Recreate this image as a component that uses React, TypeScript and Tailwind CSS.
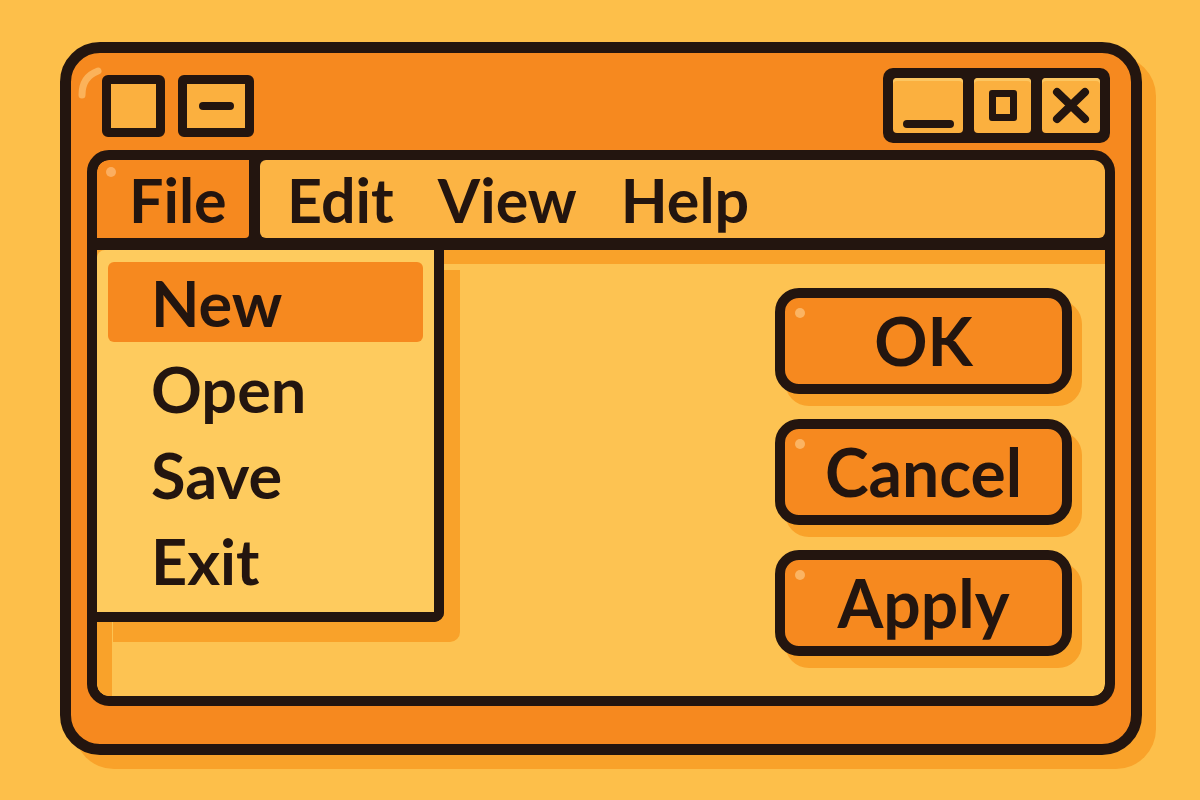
const ink = 'border-[#23150f]';

const menuItems = ['New', 'Open', 'Save', 'Exit'];
const buttons = ['OK', 'Cancel', 'Apply'];

export default function App() {
  return (
    <div className="w-[1200px] h-[800px] bg-[#fdbf4a] pt-[42px] pl-[60px] font-[Lato,sans-serif] font-bold text-[#23150f]">
      <div className={`relative w-[1082px] h-[713px] rounded-[40px] border-[11px] ${ink} bg-[#f6891f] shadow-[14px_14px_0_#f9a22a] flex flex-col px-[16px] pb-[38px]`}>
        {/* gloss mark */}
        <svg className="absolute left-[5px] top-[8px]" width="36" height="44" viewBox="0 0 36 44">
          <path d="M6 34 C6 22 11 14 22 10" stroke="#fbb25a" strokeWidth="7" strokeLinecap="round" fill="none" />
        </svg>

        {/* title bar */}
        <div className="h-[97px] flex justify-between">
          <div className="flex gap-[13px] pl-[15px] pt-[22px]">
            <div className={`w-[63px] h-[62px] border-[9px] ${ink} rounded-[6px] bg-[#fbb03f]`} />
            <div className={`w-[76px] h-[62px] border-[9px] ${ink} rounded-[6px] bg-[#fbb03f] flex items-center justify-center`}>
              <div className="w-[35px] h-[8px] rounded-full bg-[#23150f]" />
            </div>
          </div>
          <div className="pt-[15px] pr-[5px]">
            <div className="flex gap-[11px] p-[10px] bg-[#23150f] rounded-[10px]">
              <div className="w-[70px] h-[55px] rounded-[4px] bg-[#fbb03f] shadow-[inset_0_3px_0_#fcc661] flex items-end justify-center pb-[5px]">
                <div className="w-[51px] h-[8px] rounded-full bg-[#23150f]" />
              </div>
              <div className="w-[57px] h-[55px] rounded-[4px] bg-[#fbb03f] shadow-[inset_0_3px_0_#fcc661] flex items-center justify-center">
                <div className={`w-[28px] h-[31px] border-[7px] ${ink} rounded-[3px]`} />
              </div>
              <div className="w-[58px] h-[55px] rounded-[4px] bg-[#fbb03f] shadow-[inset_0_3px_0_#fcc661] flex items-center justify-center">
                <svg width="38" height="37" viewBox="0 0 38 37">
                  <path d="M5 5 L33 32 M33 5 L5 32" stroke="#23150f" strokeWidth="8" strokeLinecap="round" />
                </svg>
              </div>
            </div>
          </div>
        </div>

        {/* main panel */}
        <div className={`flex-1 flex flex-col gap-[12px] border-[10px] ${ink} bg-[#23150f] rounded-[22px] overflow-hidden`}>
          <div className="h-[78px] flex gap-[11px] shrink-0">
            <div className="relative w-[152px] bg-[#f6891f] rounded-tl-[12px] rounded-br-[4px] flex items-center pl-[32px] text-[61px] leading-none">
              <div className="absolute left-[9px] top-[7px] w-[10px] h-[10px] rounded-full bg-[#fbae60]" />
              File
            </div>
            <div className="flex-1 bg-[#fcb444] rounded-[6px] flex items-center gap-[44px] pl-[27px] text-[61px] leading-none">
              <span>Edit</span>
              <span>View</span>
              <span>Help</span>
            </div>
          </div>

          <div className="relative flex-1 bg-[#fdc352] rounded-b-[12px] shadow-[inset_15px_14px_0_#f9a22a] flex justify-end pt-[38px] pr-[33px]">
            <div className="flex flex-col gap-[25px]">
              {buttons.map((b) => (
                <div
                  key={b}
                  className={`relative w-[297px] h-[106px] border-[10px] ${ink} rounded-[24px] bg-[#f6891f] shadow-[10px_12px_0_#f9a22a] flex items-center justify-center text-[66px] leading-none`}
                >
                  <div className="absolute left-[10px] top-[10px] w-[10px] h-[10px] rounded-full bg-[#fbb463]" />
                  {b}
                </div>
              ))}
            </div>

            {/* open File menu */}
            <div className={`absolute left-0 top-0 w-[347px] h-[372px] bg-[#fecb5e] border-r-[10px] border-b-[10px] ${ink} rounded-br-[10px] rounded-tl-[8px] shadow-[16px_20px_0_#f9a22a] pt-[12px] px-[11px] flex flex-col gap-[6px]`}>
              {menuItems.map((m, i) => (
                <div
                  key={m}
                  className={`h-[80px] rounded-[6px] flex items-center pl-[43px] text-[63px] leading-none ${i === 0 ? 'bg-[#f6891f]' : ''}`}
                >
                  {m}
                </div>
              ))}
            </div>
          </div>
        </div>
      </div>
    </div>
  );
}
